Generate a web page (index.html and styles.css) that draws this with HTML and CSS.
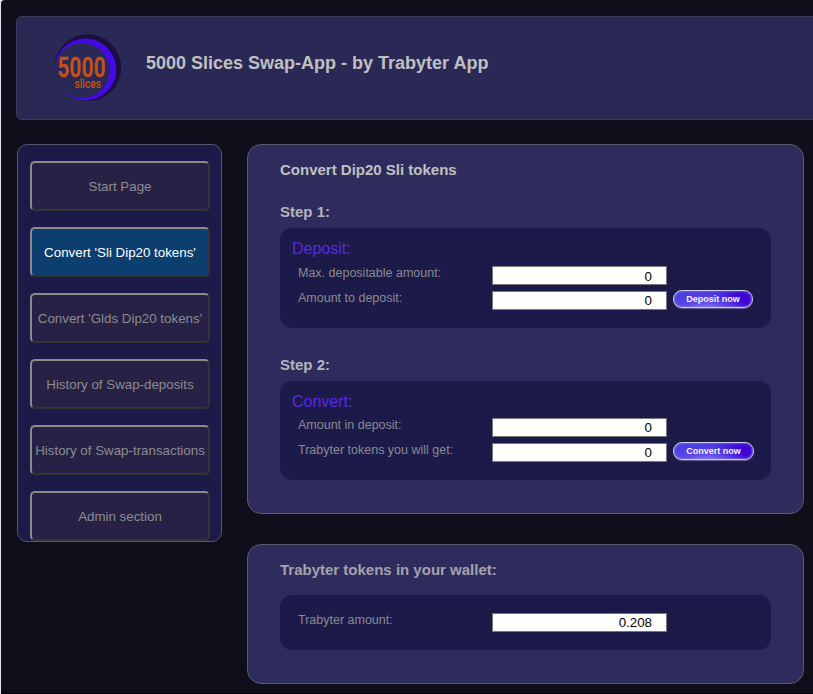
FILE: index.html
```html
<!DOCTYPE html>
<html lang="en">
<head>
<meta charset="utf-8">
<title>5000 Slices Swap-App</title>
<link rel="stylesheet" href="styles.css">
</head>
<body>
<div class="app">
  <header class="header">
    <svg class="logo" viewBox="0 0 70 68" width="70" height="68" aria-label="5000 slices">
      <circle cx="34.8" cy="33.6" r="33.4" fill="#1d0e40"/>
      <circle cx="32.4" cy="35.5" r="30.9" fill="#430ae6"/>
      <circle cx="29.1" cy="36.6" r="27.5" fill="#2a2955"/>
      <text class="logo-big" x="4.5" y="42.5" textLength="48.5" lengthAdjust="spacingAndGlyphs">5000</text>
      <text class="logo-small" x="21.5" y="53.5" textLength="26.5" lengthAdjust="spacingAndGlyphs">slices</text>
    </svg>
    <h1 class="title">5000 Slices Swap-App - by Trabyter App</h1>
  </header>
  <div class="columns">
    <nav class="sidebar">
      <button class="nav-button">Start Page</button>
      <button class="nav-button active">Convert 'Sli Dip20 tokens'</button>
      <button class="nav-button">Convert 'Glds Dip20 tokens'</button>
      <button class="nav-button">History of Swap-deposits</button>
      <button class="nav-button">History of Swap-transactions</button>
      <button class="nav-button">Admin section</button>
    </nav>
    <main class="content">
      <section class="card card-convert">
        <h2 class="card-title">Convert Dip20 Sli tokens</h2>
        <h3 class="step">Step 1:</h3>
        <div class="panel panel-deposit">
          <h4 class="panel-title">Deposit:</h4>
          <div class="row"><label class="label">Max. depositable amount:</label><input class="field" value="0" readonly></div>
          <div class="row"><label class="label">Amount to deposit:</label><input class="field raised" value="0"><button class="action">Deposit now</button></div>
        </div>
        <h3 class="step step-two">Step 2:</h3>
        <div class="panel panel-swap">
          <h4 class="panel-title">Convert:</h4>
          <div class="row"><label class="label">Amount in deposit:</label><input class="field raised" value="0" readonly></div>
          <div class="row"><label class="label">Trabyter tokens you will get:</label><input class="field raised" value="0"><button class="action action-wide">Convert now</button></div>
        </div>
      </section>
      <section class="card card-wallet">
        <h2 class="card-title dim">Trabyter tokens in your wallet:</h2>
        <div class="panel panel-wallet">
          <div class="row"><label class="label">Trabyter amount:</label><input class="field raised" value="0.208" readonly></div>
        </div>
      </section>
    </main>
  </div>
</div>
</body>
</html>
```
FILE: styles.css
```css
* { box-sizing: border-box; }
html, body { margin: 0; height: 694px; overflow: hidden; }
body { background: #dbe7f0; font-family: "Liberation Sans", Arial, sans-serif; }
h1, h2, h3, h4 { margin: 0; }

.app {
  height: 694px;
  margin-left: 1px;
  padding: 16px 0 0 15px;
  background: #0f0e1a;
  border-top-left-radius: 4px;
  border-bottom: 1px solid #030208;
}
.header {
  display: flex;
  height: 104px;
  margin-right: -10px;
  padding: 17px 0 0 36px;
  background: #2a2955;
  border: 1px solid #3e3d60;
  border-radius: 6px;
}
.logo { flex: none; overflow: visible; }
.logo-big { font: 500 28px Roboto, sans-serif; letter-spacing: .6px; fill: #c65218; stroke: #c65218; stroke-width: .6px; }
.logo-small { font: 500 13px Roboto, sans-serif; fill: #c65218; }
.title {
  margin: 17px 0 0 23px;
  font-size: 18px;
  line-height: 24px;
  color: #c0c0c0;
  white-space: nowrap;
}

.columns { display: flex; align-items: flex-start; padding: 24px 0 0 1px; }
.sidebar {
  display: flex;
  flex-direction: column;
  gap: 16px;
  width: 205px;
  height: 398px;
  padding: 16px 0 0 12px;
  background: #1b1a49;
  border: 1px solid #55556b;
  border-radius: 10px;
}
.nav-button {
  flex: none;
  width: 180px;
  height: 50px;
  padding: 0;
  background: #272145;
  border: 2px solid;
  border-color: #8b8b8b #343434 #343434 #8b8b8b;
  border-radius: 5px;
  font: 13.333px "Liberation Sans", Arial, sans-serif;
  color: #8c8c91;
  white-space: nowrap;
}
.nav-button.active { background: #0d3e70; color: #fff; }

.content { display: flex; flex-direction: column; gap: 30px; margin-left: 25px; }
.card {
  width: 557px;
  padding: 16px 32px 0;
  background: #2d2c5c;
  border: 1px solid #5b5b68;
  border-radius: 14px;
}
.card-convert { height: 370px; }
.card-wallet { height: 140px; }
.card-title, .step { font-size: 15px; line-height: 18px; color: #c0c0c0; }
.card-title.dim { color: #a3a2ae; }
.step { margin-top: 24px; color: #b4b4ba; }
.step-two { margin-top: 28px; }

.panel {
  width: 491px;
  margin-top: 7px;
  padding: 10px 0 0 12px;
  background: #1b1a49;
  border-radius: 12px;
}
.panel-deposit { height: 100px; }
.panel-swap { height: 99px; }
.panel-wallet { height: 55px; margin-top: 16px; padding-top: 15px; }
.panel-title { font-size: 16px; font-weight: 400; line-height: 21px; color: #5a28e6; }
.row { display: flex; align-items: flex-start; height: 25px; padding-left: 6px; }
.label { width: 194px; padding-top: 7px; font-size: 12.5px; line-height: 15px; color: #8a8a90; white-space: nowrap; }
.field {
  width: 175px;
  height: 19px;
  margin: 7px 0 0;
  padding: 1px 14px 0 2px;
  background: #fff;
  border: 1px solid #767676;
  font: 13.333px "Liberation Sans", Arial, sans-serif;
  color: #000;
  text-align: right;
}
.field.raised { padding-top: 0; padding-bottom: 1px; }
.panel-swap .field { margin-top: 6px; }
.panel-swap .label { padding-top: 6px; }
.panel-wallet .label { padding-top: 3px; }
.panel-wallet .field { margin-top: 3px; }
.action {
  width: 80px;
  height: 18px;
  margin: 6px 0 0 6px;
  padding: 0;
  background: radial-gradient(ellipse at 42% 115%, #8270ec 0%, rgba(98, 76, 232, .65) 35%, transparent 65%), linear-gradient(90deg, #4c40e2 0%, #4a38df 50%, #3d04d4 85%);
  border: 1px solid #cfcdea;
  border-radius: 9px;
  box-shadow: inset 0 0 3px #8f82ee, 0 1px 1px #62608b;
  font: 700 9px "Liberation Sans", Arial, sans-serif;
  color: #f3f1ff;
  white-space: nowrap;
}
.action-wide { width: 81px; margin-top: 5px; }
```
